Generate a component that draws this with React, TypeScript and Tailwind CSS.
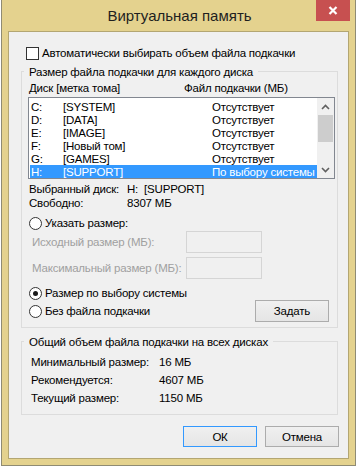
import React from "react";

const disks = [
  { letter: "C:", label: "[SYSTEM]", status: "Отсутствует" },
  { letter: "D:", label: "[DATA]", status: "Отсутствует" },
  { letter: "E:", label: "[IMAGE]", status: "Отсутствует" },
  { letter: "F:", label: "[Новый том]", status: "Отсутствует" },
  { letter: "G:", label: "[GAMES]", status: "Отсутствует" },
  { letter: "H:", label: "[SUPPORT]", status: "По выбору системы", selected: true },
];

function Radio({ checked, label }: { checked?: boolean; label: string }) {
  return (
    <div className="flex h-[14px] items-center">
      <span className="flex h-[13px] w-[13px] items-center justify-center rounded-full border border-[#333333] bg-white">
        {checked && <span className="h-[5px] w-[5px] rounded-full bg-[#1a1a1a]" />}
      </span>
      <span className="ml-[3px]">{label}</span>
    </div>
  );
}

function Button({ children, focused }: { children: React.ReactNode; focused?: boolean }) {
  return (
    <button
      className={
        focused
          ? "flex h-[21px] w-[74px] items-center justify-center border border-[#3399ff] bg-linear-to-b from-[#f0f0f0] to-[#e5e5e5] text-black"
          : "flex h-[21px] w-[74px] items-center justify-center border border-[#acacac] bg-linear-to-b from-[#f0f0f0] to-[#e5e5e5] text-black"
      }
    >
      {children}
    </button>
  );
}

function Chevron({ up }: { up?: boolean }) {
  return (
    <svg width="9" height="6" viewBox="0 0 9 6">
      <path
        d={up ? "M1 5 L4.5 1.5 L8 5" : "M1 1 L4.5 4.5 L8 1"}
        fill="none"
        stroke="#606060"
        strokeWidth="1.6"
      />
    </svg>
  );
}

export default function App() {
  return (
    <div className="h-[467px] w-[356px] overflow-hidden whitespace-nowrap bg-white font-['Liberation_Sans',Arial,sans-serif] text-[11.5px] leading-[14px] tracking-[-0.2px] text-black">
      {/* Window frame */}
      <div className="ml-[1px] flex h-[466px] w-[355px] flex-col border-x border-b border-[#8f8b73] bg-[#e4d28e]">
        {/* Title bar */}
        <div className="flex h-[31px] shrink-0">
          <div className="flex-1 pl-[41px] pt-[7px] text-center text-[15px] leading-[18px] tracking-normal text-[#1f1f1f]">
            Виртуальная память
          </div>
          <div className="mr-[5px] flex h-[21px] w-[34px] items-center justify-center bg-[#c75050]">
            <svg width="10" height="9" viewBox="0 0 10 9">
              <path d="M1.5 1 L8.5 8 M8.5 1 L1.5 8" stroke="white" strokeWidth="2.2" />
            </svg>
          </div>
        </div>

        {/* Client area */}
        <div className="mx-[6px] flex h-[428px] flex-col border border-[#b3a672] bg-[#f0f0f0]">
          <div className="ml-[17px] mt-[13px] flex h-[16px] items-center">
            <span className="h-[13px] w-[13px] border border-[#333333] bg-white" />
            <span className="ml-[3px]">Автоматически выбирать объем файла подкачки</span>
          </div>

          {/* Group: per-disk */}
          <div className="ml-[12px] mt-[10px] flex h-[257px] w-[317px] flex-col border border-[#dcdcdc]">
            <div className="-mt-[7px] ml-[2px] self-start bg-[#f0f0f0] px-[5px]">
              Размер файла подкачки для каждого диска
            </div>
            <div className="mt-[2px] flex pl-[7px]">
              <span className="w-[155px]">Диск [метка тома]</span>
              <span>Файл подкачки (МБ)</span>
            </div>
            <div className="ml-[6px] mt-[2px] flex h-[82px] w-[307px] border border-[#828790] bg-white">
              <div className="flex-1 pl-[1px] pt-[2px]">
                {disks.map((d) => (
                  <div
                    key={d.letter}
                    className={
                      d.selected
                        ? "flex h-[13px] items-center bg-[#3399ff] pl-[1px] text-white"
                        : "flex h-[13px] items-center pl-[1px]"
                    }
                  >
                    <span className="w-[32px]">{d.letter}</span>
                    <span className="w-[149px]">{d.label}</span>
                    <span>{d.status}</span>
                  </div>
                ))}
              </div>
              <div className="flex w-[17px] flex-col bg-[#f0f0f0]">
                <div className="flex h-[17px] items-center justify-center">
                  <Chevron up />
                </div>
                <div className="mx-[1px] h-[27px] bg-[#cdcdcd]" />
                <div className="flex-1" />
                <div className="flex h-[17px] items-center justify-center">
                  <Chevron />
                </div>
              </div>
            </div>

            <div className="mt-[3px] flex pl-[7px]">
              <span className="w-[98px]">Выбранный диск:</span>
              <span>H:&nbsp;&nbsp;[SUPPORT]</span>
            </div>
            <div className="flex pl-[7px]">
              <span className="w-[98px]">Свободно:</span>
              <span>8307 МБ</span>
            </div>

            <div className="mt-[6px] pl-[7px]">
              <Radio label="Указать размер:" />
            </div>
            <div className="mt-[1px] flex h-[22px] items-center pl-[10px] text-[#a0a0a0]">
              <span className="w-[154px]">Исходный размер (МБ):</span>
              <span className="h-[22px] w-[76px] border border-[#d5d5d5] bg-[#f0f0f0]" />
            </div>
            <div className="mt-[4px] flex h-[22px] items-center pl-[10px] text-[#a0a0a0]">
              <span className="w-[154px]">Максимальный размер (МБ):</span>
              <span className="h-[22px] w-[76px] border border-[#d5d5d5] bg-[#f0f0f0]" />
            </div>
            <div className="mt-[7px] pl-[7px]">
              <Radio checked label="Размер по выбору системы" />
            </div>
            <div className="flex h-[22px] items-center justify-between pl-[7px] pr-[8px]">
              <Radio label="Без файла подкачки" />
              <button className="flex h-[22px] w-[74px] items-center justify-center border border-[#acacac] bg-linear-to-b from-[#f0f0f0] to-[#e5e5e5]">
                Задать
              </button>
            </div>
          </div>

          {/* Group: totals */}
          <div className="ml-[12px] mt-[13px] flex h-[74px] w-[317px] flex-col border border-[#dcdcdc]">
            <div className="-mt-[7px] ml-[2px] self-start bg-[#f0f0f0] px-[5px]">
              Общий объем файла подкачки на всех дисках
            </div>
            <div className="mt-[4px] pl-[9px]">
              {[
                ["Минимальный размер:", "16 МБ"],
                ["Рекомендуется:", "4607 МБ"],
                ["Текущий размер:", "1150 МБ"],
              ].map(([k, v]) => (
                <div key={k} className="flex h-[18px] items-center">
                  <span className="w-[128px]">{k}</span>
                  <span>{v}</span>
                </div>
              ))}
            </div>
          </div>

          <div className="mt-[11px] flex justify-end gap-[8px] pr-[9px]">
            <Button focused>ОК</Button>
            <Button>Отмена</Button>
          </div>
        </div>
      </div>
    </div>
  );
}
